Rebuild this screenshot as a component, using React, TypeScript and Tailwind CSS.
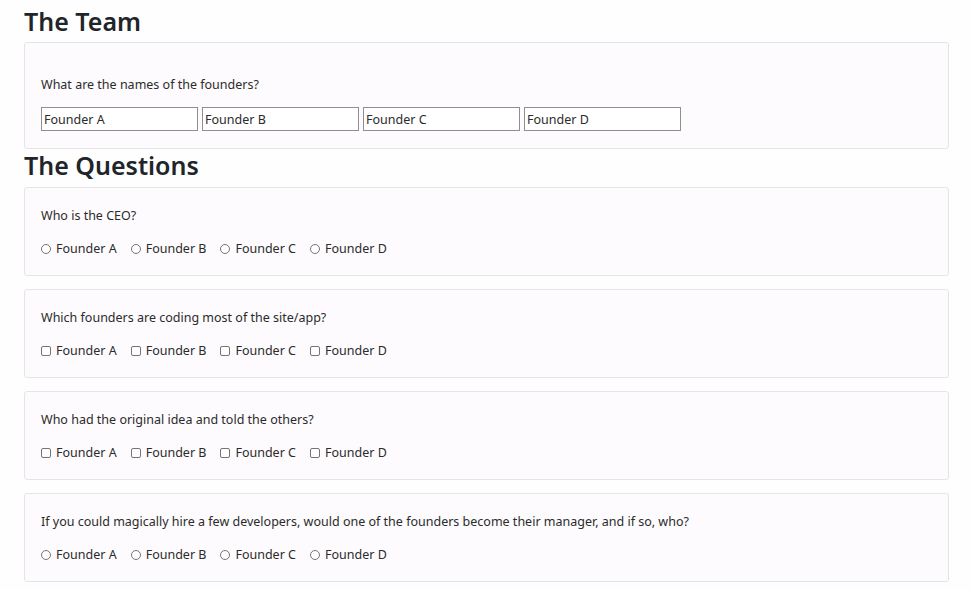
import React from 'react'

const founders = ['Founder A', 'Founder B', 'Founder C', 'Founder D']

type Question = { text: string; kind: 'radio' | 'checkbox' }

const questions: Question[] = [
  { text: 'Who is the CEO?', kind: 'radio' },
  { text: 'Which founders are coding most of the site/app?', kind: 'checkbox' },
  { text: 'Who had the original idea and told the others?', kind: 'checkbox' },
  {
    text: 'If you could magically hire a few developers, would one of the founders become their manager, and if so, who?',
    kind: 'radio',
  },
]

function Mark({ kind }: { kind: 'radio' | 'checkbox' }) {
  return kind === 'radio' ? (
    <span className="inline-block w-[10px] h-[10px] rounded-full border border-[#757575] bg-white" />
  ) : (
    <span className="inline-block w-[10px] h-[10px] rounded-[2px] border border-[#757575] bg-white" />
  )
}

export default function App() {
  return (
    <div
      className="min-h-[590px] bg-[#fefefe] text-[#2b2b2b] pl-6 pr-6 pt-[3px]"
      style={{ fontFamily: '"Noto Sans", "Open Sans", sans-serif' }}
    >
      <div className="w-[925px]">
        <h2 className="text-[25px] leading-[36px] font-semibold text-[#212529]">The Team</h2>

        {/* founder names */}
        <div className="mt-[3px] h-[107px] rounded-[3px] border border-[#e6e4e8] bg-[#fdfbfd] px-4 pt-[32px]">
          <p className="text-[12.5px] leading-[20px]">What are the names of the founders?</p>
          <div className="mt-[12px] flex gap-[4px]">
            {founders.map((f) => (
              <input
                key={f}
                readOnly
                value={f}
                className="w-[157px] h-[24px] border border-[#8f8f8f] bg-white px-[2px] text-[12.5px] text-[#2b2b2b] outline-none"
                style={{ fontFamily: '"Noto Sans", "Open Sans", sans-serif' }}
              />
            ))}
          </div>
        </div>

        <h2 className="text-[25px] leading-[32px] font-semibold text-[#212529]">The Questions</h2>

        <div className="mt-[6px] flex flex-col gap-[13px]">
          {questions.map((q) => (
            <div
              key={q.text}
              className="h-[89px] rounded-[3px] border border-[#e6e4e8] bg-[#fdfbfd] px-4 pt-[18px]"
            >
              <p className="text-[12.5px] leading-[20px]">{q.text}</p>
              <div className="mt-[13px] flex items-center gap-[14px] text-[12.5px] leading-[20px]">
                {founders.map((f) => (
                  <label key={f} className="flex items-center gap-[5px]">
                    <Mark kind={q.kind} />
                    <span>{f}</span>
                  </label>
                ))}
              </div>
            </div>
          ))}
        </div>
      </div>
    </div>
  )
}
